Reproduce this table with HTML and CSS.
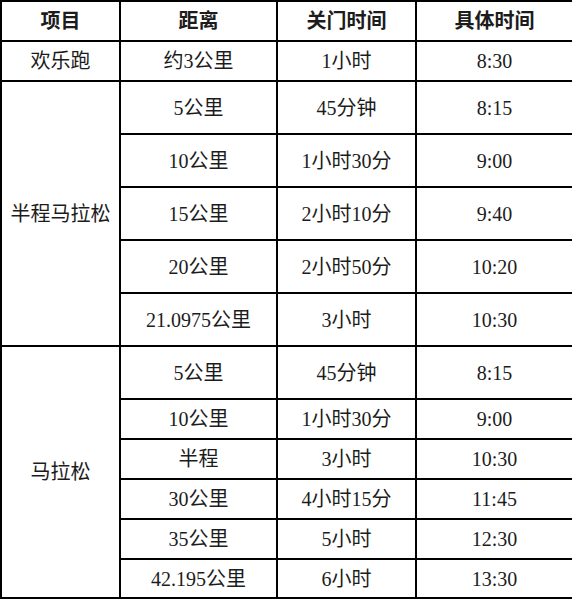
FILE: index.html
```html
<!DOCTYPE html>
<html lang="zh">
<head>
<meta charset="utf-8">
<link rel="stylesheet" href="styles.css">
</head>
<body>
<table class="schedule">
  <colgroup>
    <col class="c1"><col class="c2"><col class="c3"><col class="c4">
  </colgroup>
  <thead>
    <tr class="short">
      <th>项目</th><th>距离</th><th>关门时间</th><th>具体时间</th>
    </tr>
  </thead>
  <tbody>
    <tr class="short"><td>欢乐跑</td><td>约3公里</td><td>1小时</td><td>8:30</td></tr>
    <tr class="tall"><td rowspan="5">半程马拉松</td><td>5公里</td><td>45分钟</td><td>8:15</td></tr>
    <tr class="tall"><td>10公里</td><td>1小时30分</td><td>9:00</td></tr>
    <tr class="tall"><td>15公里</td><td>2小时10分</td><td>9:40</td></tr>
    <tr class="tall"><td>20公里</td><td>2小时50分</td><td>10:20</td></tr>
    <tr class="tall"><td>21.0975公里</td><td>3小时</td><td>10:30</td></tr>
    <tr class="tall"><td rowspan="6">马拉松</td><td>5公里</td><td>45分钟</td><td>8:15</td></tr>
    <tr class="short"><td>10公里</td><td>1小时30分</td><td>9:00</td></tr>
    <tr class="short"><td>半程</td><td>3小时</td><td>10:30</td></tr>
    <tr class="short"><td>30公里</td><td>4小时15分</td><td>11:45</td></tr>
    <tr class="short"><td>35公里</td><td>5小时</td><td>12:30</td></tr>
    <tr class="short last"><td>42.195公里</td><td>6小时</td><td>13:30</td></tr>
  </tbody>
</table>
</body>
</html>
```

FILE: styles.css
```css
html, body {
  margin: 0;
  padding: 0;
  background: #fff;
}

.schedule {
  width: 572px;
  border-collapse: collapse;
  table-layout: fixed;
  font-family: "Liberation Serif", "Noto Sans CJK SC", serif;
  font-size: 20px;
  color: #1c1c1c;
}

.c1 { width: 119px; }
.c2 { width: 157px; }
.c3 { width: 139px; }
.c4 { width: 157px; }

.schedule th,
.schedule td {
  border: 2px solid #000;
  padding: 0;
  text-align: center;
  vertical-align: middle;
  line-height: 24px;
}

.schedule th {
  font-weight: bold;
}

.short { height: 40px; }
.tall { height: 53px; }
.last { height: 39px; }
```
